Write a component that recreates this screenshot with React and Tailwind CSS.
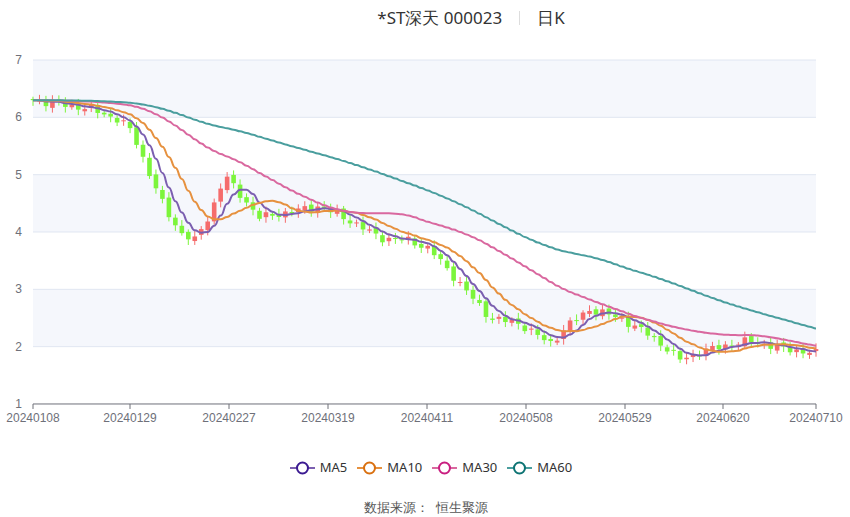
import React from "react";

const X0 = 33, X1 = 816, Y7 = 60, UNIT = 57.33;
const N = 122;
const yOf = (p) => Y7 + (7 - p) * UNIT;

const anchors = [
  [33, 6.3], [90, 6.15], [120, 5.95], [132, 5.75], [150, 5.0], [165, 4.4], [180, 4.0],
  [195, 3.85], [210, 4.3], [225, 5.0], [235, 4.75], [260, 4.25], [290, 4.35], [320, 4.45],
  [350, 4.2], [380, 3.9], [410, 3.85], [430, 3.7], [450, 3.3], [470, 2.9], [490, 2.5],
  [520, 2.4], [550, 2.05], [570, 2.4], [590, 2.65], [620, 2.5], [650, 2.2], [680, 1.78],
  [700, 1.9], [720, 2.0], [750, 2.1], [780, 1.98], [816, 1.88],
];

function interp(x) {
  for (let i = 0; i < anchors.length - 1; i++) {
    const [xa, pa] = anchors[i], [xb, pb] = anchors[i + 1];
    if (x >= xa && x <= xb) return pa + ((pb - pa) * (x - xa)) / (xb - xa);
  }
  return anchors[anchors.length - 1][1];
}

const step = (X1 - X0) / (N - 1);
const closes = [];
for (let i = 0; i < N; i++) {
  const x = X0 + i * step;
  const noise = Math.sin(i * 2.3) * 0.05 + Math.sin(i * 5.1) * 0.03;
  closes.push(interp(x) + noise);
}
const history = Array.from({ length: 60 }, () => 6.3);
const all = [...history, ...closes];
const ma = (n) =>
  closes.map((_, i) => {
    const j = i + 60;
    let s = 0;
    for (let k = j - n + 1; k <= j; k++) s += all[k];
    return s / n;
  });

const lines = [
  { name: "MA5", data: ma(5), stroke: "#7b5fb0", dot: "#3b1a91" },
  { name: "MA10", data: ma(10), stroke: "#e6913f", dot: "#d97010" },
  { name: "MA30", data: ma(30), stroke: "#d9689f", dot: "#c91e80" },
  { name: "MA60", data: ma(60), stroke: "#4a9e9e", dot: "#0d7373" },
];

function smoothPath(pts) {
  let d = `M${pts[0][0]},${pts[0][1]}`;
  for (let i = 1; i < pts.length; i++) {
    const [x0, y0] = pts[i - 1], [x1, y1] = pts[i];
    const mx = (x0 + x1) / 2;
    d += ` C${mx},${y0} ${mx},${y1} ${x1},${y1}`;
  }
  return d;
}

const labels = [
  [33, "20240108"], [130, "20240129"], [229, "20240227"], [328, "20240319"], [427, "20240411"],
  [526, "20240508"], [625, "20240529"], [723, "20240620"], [816, "20240710"],
];

function Chart() {
  return (
    <svg width="850" height="440" className="block">
      {[7, 6, 5, 4, 3, 2].map((p, i) => (
        <rect key={p} x={X0} y={yOf(p)} width={X1 - X0} height={UNIT} fill={i % 2 === 0 ? "#f5f7fc" : "#ffffff"} />
      ))}
      {[7, 6, 5, 4, 3, 2].map((p) => (
        <line key={p} x1={X0} x2={X1} y1={yOf(p)} y2={yOf(p)} stroke="#e0e6f1" />
      ))}
      {[1, 2, 3, 4, 5, 6, 7].map((p) => (
        <text key={p} x={22} y={yOf(p) + 4} textAnchor="end" fontSize="12" fill="#6e7079" fontFamily="Liberation Sans, sans-serif">{p}</text>
      ))}
      {closes.map((c, i) => {
        const o = i === 0 ? c + 0.02 : closes[i - 1] + Math.sin(i * 3.7) * 0.03;
        const up = c >= o;
        const x = X0 + i * step;
        const hi = Math.max(o, c) + 0.04 + Math.abs(Math.sin(i * 1.7)) * 0.06;
        const lo = Math.min(o, c) - 0.04 - Math.abs(Math.cos(i * 1.3)) * 0.06;
        const col = up ? "#f56c6c" : "#7cf53b";
        const top = yOf(Math.max(o, c));
        const h = Math.max(1, Math.abs(o - c) * UNIT);
        return (
          <g key={i}>
            <line x1={x} x2={x} y1={yOf(hi)} y2={yOf(lo)} stroke={col} />
            <rect x={x - 2.3} y={top} width={4.6} height={h} fill={col} />
          </g>
        );
      })}
      {lines.map((l) => (
        <path key={l.name} d={smoothPath(l.data.map((v, i) => [X0 + i * step, yOf(v)]))} fill="none" stroke={l.stroke} strokeWidth="2" />
      ))}
      <line x1={X0} x2={X1} y1={yOf(1)} y2={yOf(1)} stroke="#6e7079" />
      {labels.map(([x, t]) => (
        <g key={t}>
          <line x1={x} x2={x} y1={yOf(1)} y2={yOf(1) + 5} stroke="#6e7079" />
          <text x={x} y={yOf(1) + 18} textAnchor="middle" fontSize="12" fill="#6e7079" fontFamily="Liberation Sans, sans-serif">{t}</text>
        </g>
      ))}
    </svg>
  );
}

export default function App() {
  return (
    <div className="w-[850px] h-[517px] bg-white relative font-['Liberation_Sans','Noto_Sans_CJK_SC',sans-serif]">
      <div className="absolute top-[5px] left-0 w-full flex justify-center">
        <div className="ml-[92px] flex items-center text-[17px] text-[#333]">
          <span>*ST深天 000023</span>
          <span className="mx-[17px] h-[14px] w-px bg-[#ddd]" />
          <span>日K</span>
        </div>
      </div>
      <Chart />
      <div className="absolute top-[458px] left-0 w-full flex justify-center gap-[10px] text-[13px] text-[#333]">
        <div className="ml-[12px] flex gap-[10px]">
          {lines.map((l) => (
            <div key={l.name} className="flex items-center gap-[5px]">
              <svg width="25" height="14">
                <line x1="0" x2="25" y1="7" y2="7" stroke={l.stroke} strokeWidth="2" />
                <circle cx="12.5" cy="7" r="5.5" fill="#fff" stroke={l.dot} strokeWidth="2" />
              </svg>
              <span>{l.name}</span>
            </div>
          ))}
        </div>
      </div>
      <div className="absolute top-[498px] left-0 w-full flex justify-center text-[13px] text-[#555]">
        <span className="ml-[2px]">数据来源：&nbsp;&nbsp;恒生聚源</span>
      </div>
    </div>
  );
}
